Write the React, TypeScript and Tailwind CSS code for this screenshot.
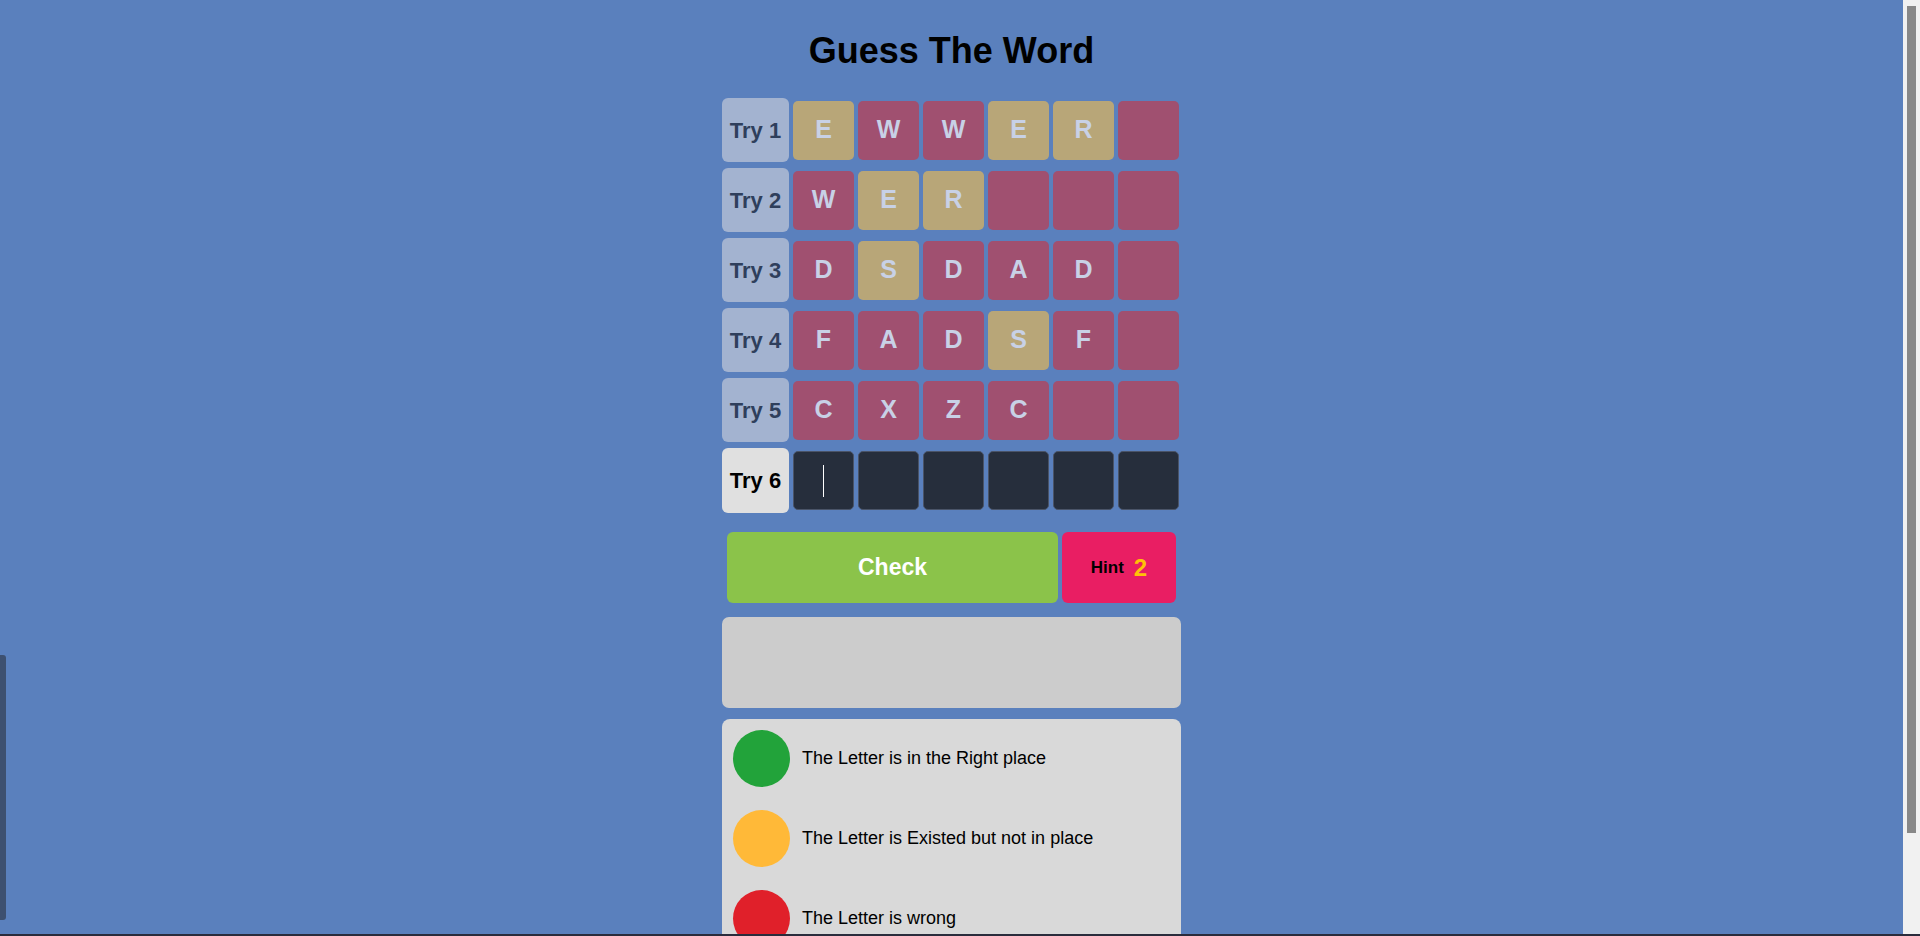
import React from 'react';

type Cell = { ch: string; s: 'y' | 'r' };

const tries: Cell[][] = [
  [{ ch: 'E', s: 'y' }, { ch: 'W', s: 'r' }, { ch: 'W', s: 'r' }, { ch: 'E', s: 'y' }, { ch: 'R', s: 'y' }, { ch: '', s: 'r' }],
  [{ ch: 'W', s: 'r' }, { ch: 'E', s: 'y' }, { ch: 'R', s: 'y' }, { ch: '', s: 'r' }, { ch: '', s: 'r' }, { ch: '', s: 'r' }],
  [{ ch: 'D', s: 'r' }, { ch: 'S', s: 'y' }, { ch: 'D', s: 'r' }, { ch: 'A', s: 'r' }, { ch: 'D', s: 'r' }, { ch: '', s: 'r' }],
  [{ ch: 'F', s: 'r' }, { ch: 'A', s: 'r' }, { ch: 'D', s: 'r' }, { ch: 'S', s: 'y' }, { ch: 'F', s: 'r' }, { ch: '', s: 'r' }],
  [{ ch: 'C', s: 'r' }, { ch: 'X', s: 'r' }, { ch: 'Z', s: 'r' }, { ch: 'C', s: 'r' }, { ch: '', s: 'r' }, { ch: '', s: 'r' }],
];

const legend = [
  { color: 'bg-[#22a33a]', text: 'The Letter is in the Right place' },
  { color: 'bg-[#ffb938]', text: 'The Letter is Existed but not in place' },
  { color: 'bg-[#e0202a]', text: 'The Letter is wrong' },
];

export default function App() {
  return (
    <div className="flex h-[936px] overflow-hidden bg-[#5a80bd] font-['Liberation_Sans',Arial,sans-serif]">
      <main className="flex-1 pt-[31px] pb-[90px]">
        <h1 className="text-center text-[36px] leading-[40px] font-bold text-black">Guess The Word</h1>

        <div className="mx-auto w-[459px] mt-[27px]">
          <div className="flex flex-col gap-[6px]">
            {tries.map((row, i) => (
              <div key={i} className="flex items-center gap-[4px]">
                <div className="w-[67px] h-[64px] rounded-[6px] bg-[#a3b3d0] flex items-center justify-center text-[22px] font-bold text-[#2f3f5c]">
                  Try {i + 1}
                </div>
                {row.map((c, j) => (
                  <div
                    key={j}
                    className={`w-[61px] h-[59px] rounded-[5px] flex items-center justify-center text-[25px] font-bold text-[#c8d1e6] ${
                      c.s === 'y' ? 'bg-[#b8a678]' : 'bg-[#a05070]'
                    }`}
                  >
                    {c.ch}
                  </div>
                ))}
              </div>
            ))}

            <div className="flex items-center gap-[4px]">
              <div className="w-[67px] h-[65px] rounded-[6px] bg-[#e0e0e0] flex items-center justify-center text-[22px] font-bold text-black">
                Try 6
              </div>
              {[0, 1, 2, 3, 4, 5].map((j) => (
                <div key={j} className="w-[61px] h-[59px] rounded-[5px] bg-[#262e3c] border border-[#4a5468] flex items-center justify-center">
                  {j === 0 && <div className="w-px h-[32px] bg-white" />}
                </div>
              ))}
            </div>
          </div>

          <div className="flex gap-[4px] px-[5px] mt-[19px]">
            <button className="flex-1 h-[71px] rounded-[6px] bg-[#8bc34a] text-white text-[23px] font-bold">Check</button>
            <button className="w-[114px] h-[71px] rounded-[6px] bg-[#e91e63] flex items-center justify-center gap-[10px]">
              <span className="text-[17px] font-bold text-black">Hint</span>
              <span className="text-[24px] font-bold text-[#ffc107]">2</span>
            </button>
          </div>

          <div className="mt-[14px] h-[91px] rounded-[7px] bg-[#cccccc]" />

          <div className="mt-[11px] rounded-[8px] bg-[#d9d9d9] px-[11px] pt-[11px] pb-[16px] flex flex-col gap-[23px]">
            {legend.map((l) => (
              <div key={l.text} className="flex items-center gap-[12px]">
                <div className={`w-[57px] h-[57px] rounded-full ${l.color}`} />
                <span className="text-[18px] text-black">{l.text}</span>
              </div>
            ))}
          </div>
        </div>
      </main>

      {/* scrollbar */}
      <div className="w-[17px] shrink-0 bg-[#f1f1f1] pt-[6px] flex justify-center">
        <div className="w-[9px] h-[827px] bg-[#888888]" />
      </div>

      <div className="fixed left-0 top-[655px] w-[6px] h-[265px] rounded-r-[3px] bg-[#3d5070]" />
      <div className="fixed left-0 bottom-0 w-full h-[2px] bg-[#2a2c3c]" />
    </div>
  );
}
